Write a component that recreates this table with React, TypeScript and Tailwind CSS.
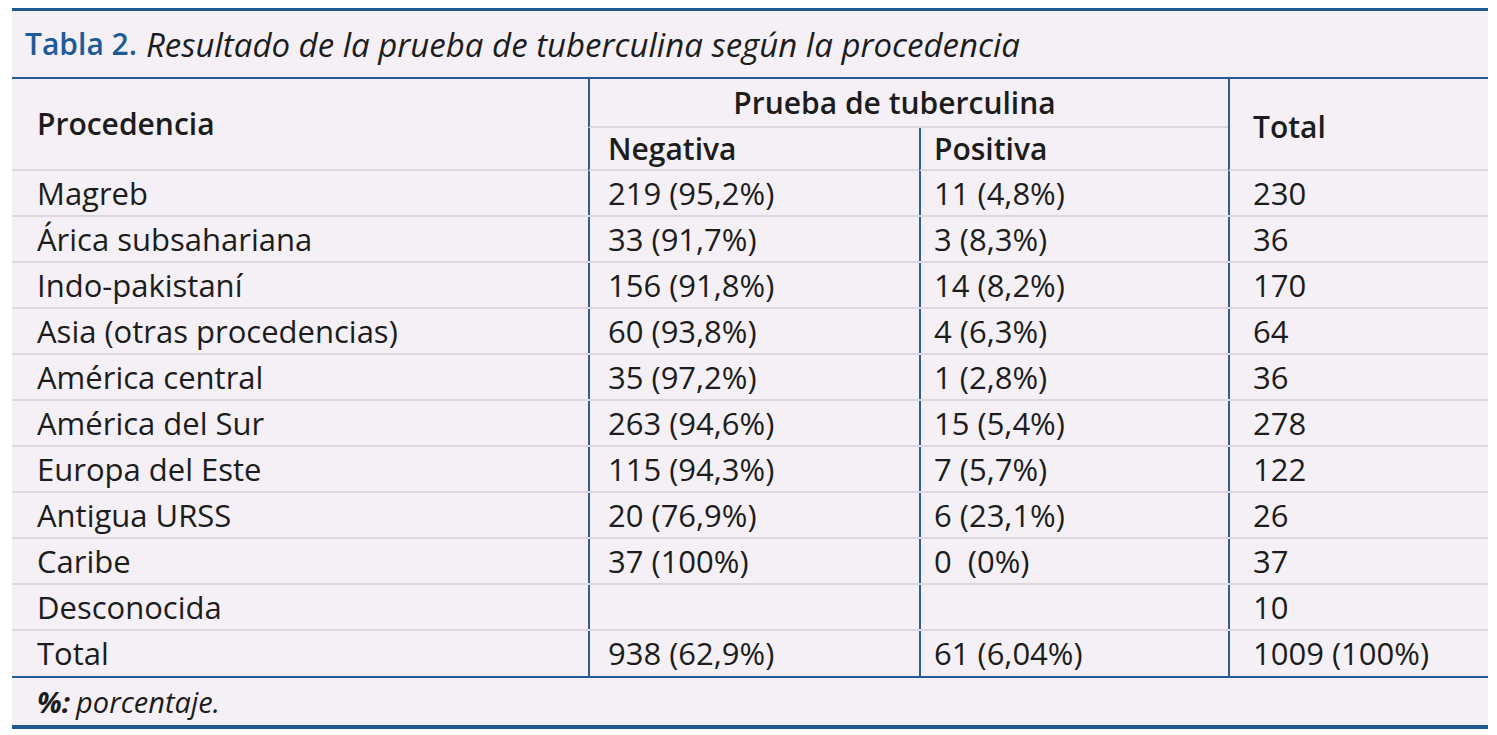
const rows: [string, string, string, string][] = [
  ["Magreb", "219 (95,2%)", "11 (4,8%)", "230"],
  ["Árica subsahariana", "33 (91,7%)", "3 (8,3%)", "36"],
  ["Indo-pakistaní", "156 (91,8%)", "14 (8,2%)", "170"],
  ["Asia (otras procedencias)", "60 (93,8%)", "4 (6,3%)", "64"],
  ["América central", "35 (97,2%)", "1 (2,8%)", "36"],
  ["América del Sur", "263 (94,6%)", "15 (5,4%)", "278"],
  ["Europa del Este", "115 (94,3%)", "7 (5,7%)", "122"],
  ["Antigua URSS", "20 (76,9%)", "6 (23,1%)", "26"],
  ["Caribe", "37 (100%)", "0  (0%)", "37"],
  ["Desconocida", "", "", "10"],
];

const App = () => {
  return (
    <main className="min-h-screen w-full bg-white pt-[8px] font-['Open_Sans',sans-serif] text-[#1c1c1c]">
      <div className="ml-[12px] w-[1476px] border-t-[3px] border-b-[4px] border-[#205896] bg-[#f4f0f5]">
        {/* title */}
        <div className="flex h-[68px] items-center border-b-2 border-[#245b94] pl-[13px] leading-none">
          <span className="text-[30px] font-semibold text-[#1d5a98]">Tabla 2.</span>
          <span className="ml-[9px] text-[33px] italic">Resultado de la prueba de tuberculina según la procedencia</span>
        </div>

        {/* header */}
        <div className="grid grid-cols-[576px_331px_309px_260px] grid-rows-[49px_43px] text-[30px] font-semibold leading-none">
          <div className="row-span-2 flex items-center border-b-2 border-[#dcd8de] pl-[25px]">Procedencia</div>
          <div className="col-span-2 flex items-center justify-center border-b-2 border-l-2 border-b-[#dcd8de] border-l-[#2d5e95] pr-[29px]">
            Prueba de tuberculina
          </div>
          <div className="row-span-2 flex items-center border-b-2 border-l-2 border-b-[#dcd8de] border-l-[#2d5e95] pl-[23px] pt-[6px]">
            Total
          </div>
          <div className="flex items-center border-b-2 border-l-2 border-b-[#dcd8de] border-l-[#2d5e95] pl-[18px]">Negativa</div>
          <div className="flex items-center border-b-2 border-l-2 border-b-[#dcd8de] border-l-[#2d5e95] pl-[13px]">Positiva</div>
        </div>

        {/* body */}
        {rows.map((r) => (
          <div key={r[0]} className="grid h-[46px] grid-cols-[576px_331px_309px_260px] border-b-2 border-[#dcd8de] text-[31px] leading-none">
            <div className="flex items-center pl-[25px]">{r[0]}</div>
            <div className="flex items-center border-l-2 border-[#2d5e95] pl-[18px] whitespace-pre">{r[1]}</div>
            <div className="flex items-center border-l-2 border-[#2d5e95] pl-[13px] whitespace-pre">{r[2]}</div>
            <div className="flex items-center border-l-2 border-[#2d5e95] pl-[23px]">{r[3]}</div>
          </div>
        ))}
        <div className="grid h-[47px] grid-cols-[576px_331px_309px_260px] border-b-2 border-[#245b94] text-[31px] leading-none">
          <div className="flex items-center pl-[25px]">Total</div>
          <div className="flex items-center border-l-2 border-[#2d5e95] pl-[18px]">938 (62,9%)</div>
          <div className="flex items-center border-l-2 border-[#2d5e95] pl-[13px]">61 (6,04%)</div>
          <div className="flex items-center border-l-2 border-[#2d5e95] pl-[23px]">1009 (100%)</div>
        </div>

        {/* footnote */}
        <div className="flex h-[47px] items-center pl-[25px] text-[29px] italic leading-none">
          <span className="font-bold">%:</span>
          <span className="ml-[6px]">porcentaje.</span>
        </div>
      </div>
    </main>
  );
};

export default App;
